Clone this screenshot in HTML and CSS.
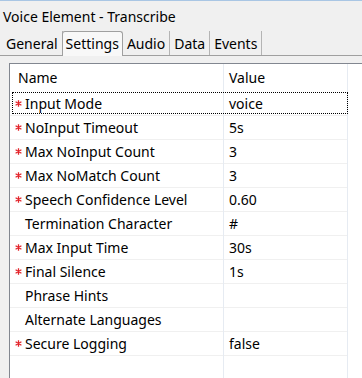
FILE: index.html
```html
<!DOCTYPE html>
<html>
<head>
<meta charset="utf-8">
<link rel="stylesheet" href="styles.css">
</head>
<body>
<div class="title">Voice Element - Transcribe</div>
<div class="tabs">
  <div class="tab first">General</div>
  <div class="tab active">Settings</div>
  <div class="tab">Audio</div>
  <div class="tab">Data</div>
  <div class="tab">Events</div>
</div>
<div class="panel">
  <div class="table">
    <div class="row head">
      <div class="cell name">Name</div>
      <div class="cell value">Value</div>
      <div class="cell rest"></div>
    </div>
    <div class="row focus">
      <div class="cell name"><svg class="req" viewBox="0 0 7 7"><path d="M3.5 0.2V6.8M0.6 1.8L6.4 5.2M0.6 5.2L6.4 1.8"/></svg>Input Mode</div>
      <div class="cell value">voice</div>
      <div class="cell rest"></div>
    </div>
    <div class="row">
      <div class="cell name"><svg class="req" viewBox="0 0 7 7"><path d="M3.5 0.2V6.8M0.6 1.8L6.4 5.2M0.6 5.2L6.4 1.8"/></svg>NoInput Timeout</div>
      <div class="cell value">5s</div>
      <div class="cell rest"></div>
    </div>
    <div class="row">
      <div class="cell name"><svg class="req" viewBox="0 0 7 7"><path d="M3.5 0.2V6.8M0.6 1.8L6.4 5.2M0.6 5.2L6.4 1.8"/></svg>Max NoInput Count</div>
      <div class="cell value">3</div>
      <div class="cell rest"></div>
    </div>
    <div class="row">
      <div class="cell name"><svg class="req" viewBox="0 0 7 7"><path d="M3.5 0.2V6.8M0.6 1.8L6.4 5.2M0.6 5.2L6.4 1.8"/></svg>Max NoMatch Count</div>
      <div class="cell value">3</div>
      <div class="cell rest"></div>
    </div>
    <div class="row">
      <div class="cell name"><svg class="req" viewBox="0 0 7 7"><path d="M3.5 0.2V6.8M0.6 1.8L6.4 5.2M0.6 5.2L6.4 1.8"/></svg>Speech Confidence Level</div>
      <div class="cell value">0.60</div>
      <div class="cell rest"></div>
    </div>
    <div class="row">
      <div class="cell name"><span class="noreq"></span>Termination Character</div>
      <div class="cell value">#</div>
      <div class="cell rest"></div>
    </div>
    <div class="row">
      <div class="cell name"><svg class="req" viewBox="0 0 7 7"><path d="M3.5 0.2V6.8M0.6 1.8L6.4 5.2M0.6 5.2L6.4 1.8"/></svg>Max Input Time</div>
      <div class="cell value">30s</div>
      <div class="cell rest"></div>
    </div>
    <div class="row">
      <div class="cell name"><svg class="req" viewBox="0 0 7 7"><path d="M3.5 0.2V6.8M0.6 1.8L6.4 5.2M0.6 5.2L6.4 1.8"/></svg>Final Silence</div>
      <div class="cell value">1s</div>
      <div class="cell rest"></div>
    </div>
    <div class="row">
      <div class="cell name"><span class="noreq"></span>Phrase Hints</div>
      <div class="cell value"></div>
      <div class="cell rest"></div>
    </div>
    <div class="row">
      <div class="cell name"><span class="noreq"></span>Alternate Languages</div>
      <div class="cell value"></div>
      <div class="cell rest"></div>
    </div>
    <div class="row">
      <div class="cell name"><svg class="req" viewBox="0 0 7 7"><path d="M3.5 0.2V6.8M0.6 1.8L6.4 5.2M0.6 5.2L6.4 1.8"/></svg>Secure Logging</div>
      <div class="cell value">false</div>
      <div class="cell rest"></div>
    </div>
    <div class="row">
      <div class="cell name"></div>
      <div class="cell value"></div>
      <div class="cell rest"></div>
    </div>
  </div>
</div>
</body>
</html>
```
FILE: styles.css
```css
html, body {
  margin: 0;
  padding: 0;
  width: 362px;
  height: 378px;
  overflow: hidden;
  background: #f0f0f0;
  font-family: "Noto Sans", "Open Sans", sans-serif;
  font-size: 14px;
  color: #000;
}
body {
  border-top: 1px solid #a9c6e4;
  box-sizing: border-box;
}
.title {
  height: 30px;
  box-sizing: border-box;
  padding: 4px 0 0 3px;
  line-height: 24px;
}
.tabs {
  display: flex;
  height: 25px;
  box-sizing: border-box;
  border-bottom: 1px solid #a0a0a0;
  padding-left: 2px;
}
.tab {
  box-sizing: border-box;
  height: 24px;
  padding: 0 4px 0 4px;
  line-height: 25px;
  border-right: 1px solid #b4b4b4;
}
.tab.active {
  height: 25px;
  margin-bottom: -1px;
  background: #f8f8f8;
  border: 1px solid #a0a0a0;
  border-bottom: none;
  border-radius: 3px 3px 0 0;
  line-height: 23px;
  padding: 0 3px;
  margin-left: -1px;
}
.panel {
  padding: 7px 0 0 9px;
}
.table {
  width: 400px;
  height: 330px;
  background: #fff;
  border-left: 1px solid #828790;
  border-top: 1px solid #828790;
}
.row {
  display: grid;
  grid-template-columns: 214px 124px 1fr;
  height: 24px;
  box-sizing: border-box;
  position: relative;
}
.row.head {
  height: 27px;
}
.row .cell {
  border-bottom: 1px solid #f0f0f0;
  line-height: 23px;
  white-space: nowrap;
  display: flex;
  align-items: center;
  padding-top: 1px;
}
.row.head .cell {
  border-bottom: none;
  line-height: 26px;
}
.row .rest {
  border-bottom: none;
}
.cell.name {
  border-right: 1px solid #e6ebf2;
  padding-left: 5px;
}
.cell.value {
  border-right: 1px solid #e6ebf2;
  padding-left: 5px;
}
.head .cell.name {
  padding-left: 8px;
}
.req, .noreq {
  display: inline-block;
  flex: none;
  width: 7px;
  height: 7px;
  margin-right: 3px;
}
.req {
  stroke: #e3242b;
  stroke-width: 1.3;
  fill: none;
}
.focus::after {
  content: "";
  position: absolute;
  left: 2px;
  top: 1px;
  width: 336px;
  height: 22px;
  box-sizing: border-box;
  border: 1px dotted #000;
}
```
